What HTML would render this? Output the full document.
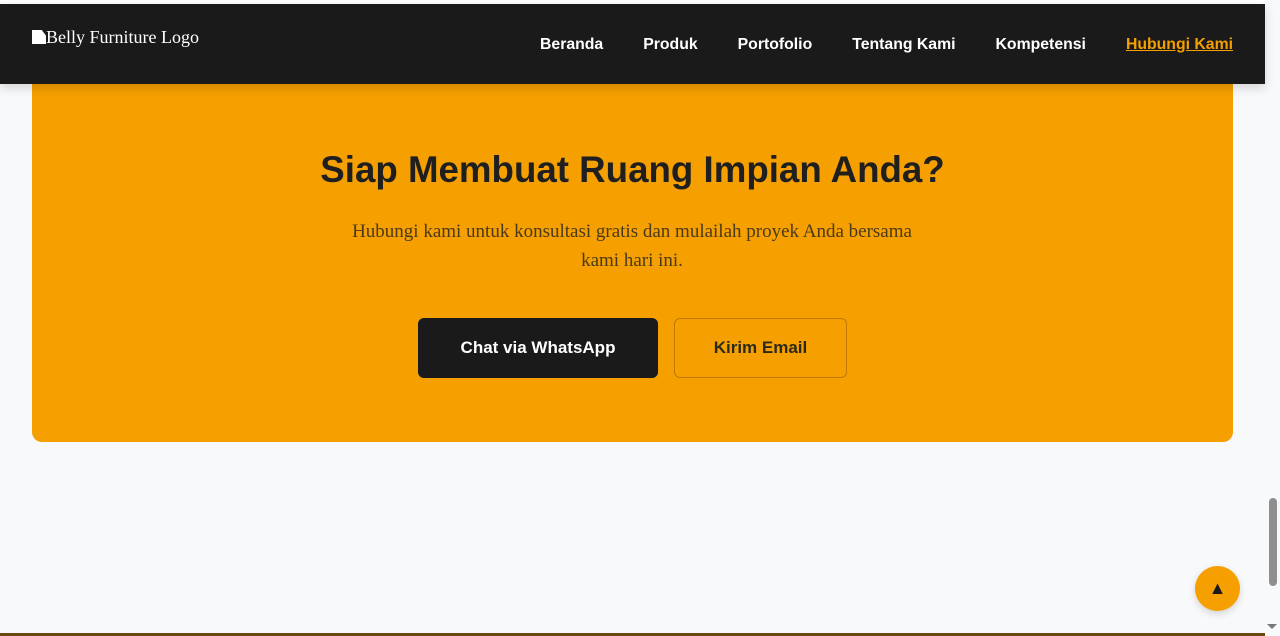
<!DOCTYPE html>
<html><head><meta charset="utf-8"><style>
html,body{margin:0;padding:0}
body{width:1280px;height:636px;background:#f8f9fb;position:relative;overflow:hidden;font-family:"Liberation Sans",sans-serif}
.top{position:absolute;left:0;top:0;width:1265px;height:4px;background:#fff}
header{position:absolute;left:0;top:4px;width:1265px;height:80px;background:#1a1a1a;box-shadow:0 4px 10px rgba(0,0,0,.15);z-index:2}
.logo{position:absolute;left:32px;top:23px;color:#fff;font-family:"Liberation Serif",serif;font-size:18px}
.logo i{display:inline-block;width:14px;height:14px;background:#fff;vertical-align:-1px;clip-path:polygon(0 0,70% 0,100% 40%,100% 100%,0 100%)}
nav{position:absolute;right:32px;top:32px;display:flex;gap:40px}
nav a{color:#fff;font-size:15.8px;font-weight:bold;text-decoration:none}
nav a.act{color:#f5a000;text-decoration:underline}
.cta{position:absolute;left:32px;top:84px;width:1201px;height:358px;background:#f5a000;border-radius:0 0 10px 10px;text-align:center}
h2{margin:0;position:absolute;top:65px;width:100%;font-size:36.7px;font-weight:bold;color:#1f1f1f}
p{position:absolute;top:133px;left:300px;width:600px;margin:0;font-family:"Liberation Serif",serif;font-size:19px;line-height:29px;color:#4a3a1a}
.b1{position:absolute;left:386px;top:234px;width:240px;height:60px;background:#1a1a1a;color:#fff;border-radius:6px;font-weight:bold;font-size:17px;line-height:60px}
.b2{position:absolute;left:642px;top:234px;width:171px;height:58px;border:1px solid #c07a00;color:#2a2a1a;border-radius:6px;font-weight:bold;font-size:17px;line-height:58px}
.up{position:absolute;left:1195px;top:566px;width:45px;height:45px;border-radius:50%;background:#f5a000;box-shadow:0 3px 8px rgba(0,0,0,.15);color:#1a1a1a;font-size:18px;text-align:center;line-height:44px}
.sb{position:absolute;right:0;top:0;width:15px;height:636px;background:#f8f9fb}
.th{position:absolute;right:3px;top:498px;width:8px;height:88px;background:#8f8f8f;border-radius:4px}
.ar{position:absolute;right:3px;top:624px;width:0;height:0;border-left:5px solid transparent;border-right:5px solid transparent;border-top:5px solid #777}
.bl{position:absolute;left:0;top:633px;width:1265px;height:3px;background:#6b4a10}
</style></head><body>
<div class="top"></div>
<header><div class="logo"><i></i>Belly Furniture Logo</div>
<nav><a>Beranda</a><a>Produk</a><a>Portofolio</a><a>Tentang Kami</a><a>Kompetensi</a><a class="act">Hubungi Kami</a></nav></header>
<div class="cta"><h2>Siap Membuat Ruang Impian Anda?</h2>
<p>Hubungi kami untuk konsultasi gratis dan mulailah proyek Anda bersama kami hari ini.</p>
<div class="b1">Chat via WhatsApp</div><div class="b2">Kirim Email</div></div>
<div class="up">▲</div>
<div class="bl"></div>
<div class="sb"><div class="th"></div><div class="ar"></div></div>
</body></html>
